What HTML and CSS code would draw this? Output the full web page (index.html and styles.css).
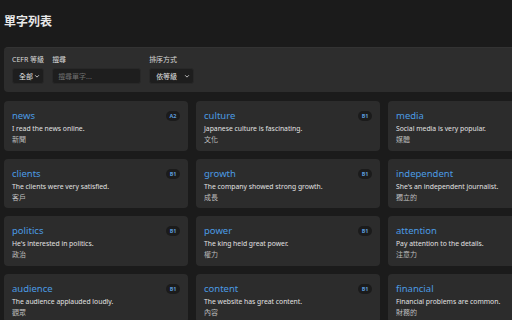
FILE: index.html
```html
<!DOCTYPE html>
<html lang="zh-Hant">
<head>
<meta charset="utf-8">
<title>單字列表</title>
<link rel="stylesheet" href="styles.css">
</head>
<body>
<div class="page">
  <h1 class="title">單字列表</h1>
  <div class="filters">
    <div class="field">
      <label class="label">CEFR 等級</label>
      <div class="select sel-level"><span>全部</span><svg class="chev" viewBox="0 0 8 8" width="6" height="6"><path d="M1.5 3 L4 5.5 L6.5 3" fill="none" stroke="#ccc" stroke-width="1.2"/></svg></div>
    </div>
    <div class="field">
      <label class="label">搜尋</label>
      <div class="input">搜尋單字...</div>
    </div>
    <div class="field">
      <label class="label">排序方式</label>
      <div class="select sel-sort"><span>依等級</span><svg class="chev" viewBox="0 0 8 8" width="6" height="6"><path d="M1.5 3 L4 5.5 L6.5 3" fill="none" stroke="#ccc" stroke-width="1.2"/></svg></div>
    </div>
  </div>
  <div class="grid">
    <div class="card"><div class="head"><span class="word">news</span><span class="badge">A2</span></div><div class="ex">I read the news online.</div><div class="zh">新聞</div></div>
    <div class="card"><div class="head"><span class="word">culture</span><span class="badge">B1</span></div><div class="ex">Japanese culture is fascinating.</div><div class="zh">文化</div></div>
    <div class="card"><div class="head"><span class="word">media</span><span class="badge">B1</span></div><div class="ex">Social media is very popular.</div><div class="zh">媒體</div></div>
    <div class="card"><div class="head"><span class="word">clients</span><span class="badge">B1</span></div><div class="ex">The clients were very satisfied.</div><div class="zh">客戶</div></div>
    <div class="card"><div class="head"><span class="word">growth</span><span class="badge">B1</span></div><div class="ex">The company showed strong growth.</div><div class="zh">成長</div></div>
    <div class="card"><div class="head"><span class="word">independent</span><span class="badge">B1</span></div><div class="ex">She's an independent journalist.</div><div class="zh">獨立的</div></div>
    <div class="card"><div class="head"><span class="word">politics</span><span class="badge">B1</span></div><div class="ex">He's interested in politics.</div><div class="zh">政治</div></div>
    <div class="card"><div class="head"><span class="word">power</span><span class="badge">B1</span></div><div class="ex">The king held great power.</div><div class="zh">權力</div></div>
    <div class="card"><div class="head"><span class="word">attention</span><span class="badge">B1</span></div><div class="ex">Pay attention to the details.</div><div class="zh">注意力</div></div>
    <div class="card"><div class="head"><span class="word">audience</span><span class="badge">B1</span></div><div class="ex">The audience applauded loudly.</div><div class="zh">觀眾</div></div>
    <div class="card"><div class="head"><span class="word">content</span><span class="badge">B1</span></div><div class="ex">The website has great content.</div><div class="zh">內容</div></div>
    <div class="card"><div class="head"><span class="word">financial</span><span class="badge">B1</span></div><div class="ex">Financial problems are common.</div><div class="zh">財務的</div></div>
  </div>
</div>
</body>
</html>
```
FILE: styles.css
```css
html, body {
  margin: 0;
  padding: 0;
  background: #1b1b1b;
  overflow: hidden;
}
body {
  font-family: "Noto Sans", "Noto Sans CJK TC", sans-serif;
  color: #e0e0e0;
}
.page {
  width: 568px;
  padding: 13px 4px 0 4px;
}
.title {
  margin: 0;
  font-size: 12px;
  line-height: 18px;
  font-weight: 700;
  color: #e8e8e8;
}
.filters {
  margin-top: 16px;
  background: #2d2d2d;
  border-top: 1px solid #333;
  border-radius: 4px;
  padding: 7px 8px 8px 8px;
  display: flex;
  gap: 8px;
  align-items: flex-end;
}
.field {
  display: flex;
  flex-direction: column;
  gap: 3px;
}
.label {
  font-size: 7px;
  line-height: 10px;
  color: #d8d8d8;
}
.select, .input {
  height: 16px;
  box-sizing: border-box;
  background: #1e1e1e;
  border: 1px solid #282828;
  border-radius: 3px;
  font-size: 7px;
  display: flex;
  align-items: center;
}
.select {
  padding: 0 3px 0 6px;
  justify-content: space-between;
  color: #e0e0e0;
}
.sel-level { width: 32px; }
.sel-sort { width: 45px; padding-left: 6px; }
.input {
  width: 89px;
  padding: 0 5px;
  color: #6f6f6f;
}
.chev { display: block; }
.grid {
  margin-top: 9px;
  display: grid;
  grid-template-columns: repeat(3, 184px);
  gap: 8px;
}
.card {
  background: #2c2c2c;
  border-radius: 4px;
  padding: 8px 8px 5.5px 8px;
}
.head {
  display: flex;
  justify-content: space-between;
  align-items: center;
  height: 14px;
}
.word {
  font-size: 9.5px;
  line-height: 14px;
  color: #4b9be3;
}
.badge {
  background: #1b1b1b;
  color: #5b9ad8;
  font-size: 5.5px;
  font-weight: 700;
  line-height: 10px;
  height: 10px;
  padding: 0 3.5px;
  border-radius: 5px;
}
.ex {
  font-size: 6.8px;
  line-height: 11px;
  color: #e2e2e2;
}
.zh {
  font-size: 7px;
  line-height: 11px;
  color: #bdbdbd;
}
```
